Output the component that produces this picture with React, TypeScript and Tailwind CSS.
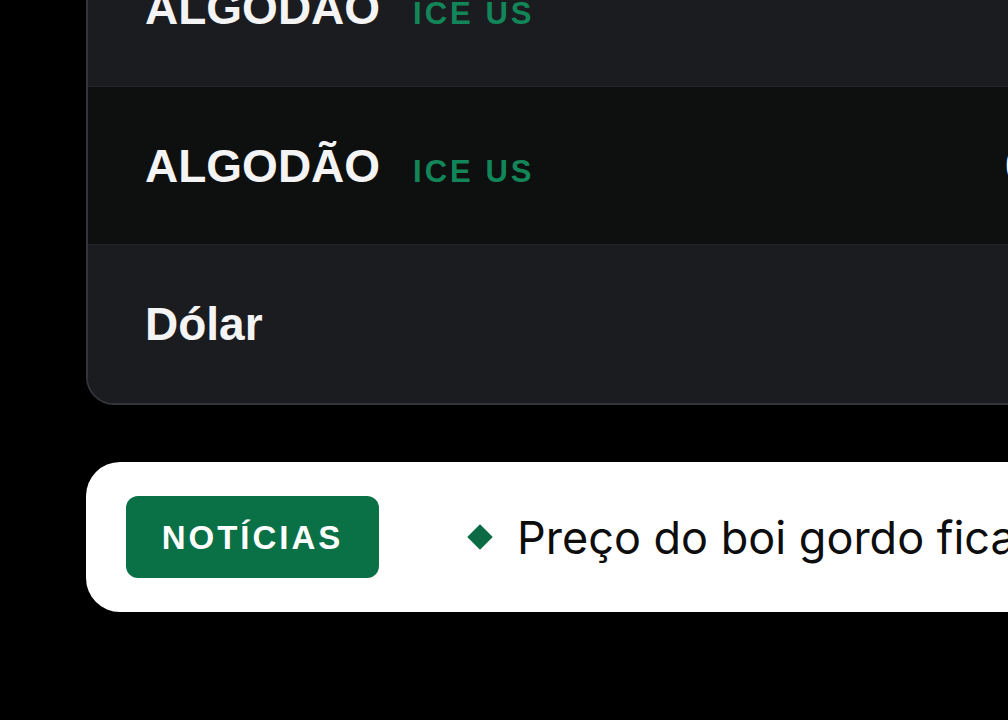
import React from 'react';

interface QuoteRow {
  name: string;
  exchange?: string;
  value?: string;
  highlight?: boolean;
}

const rows: QuoteRow[] = [
  { name: 'ALGODÃO', exchange: 'ICE US' },
  { name: 'ALGODÃO', exchange: 'ICE US', value: '0,6812', highlight: true },
  { name: 'Dólar' },
];

const font = { fontFamily: '"Liberation Sans", Arial, sans-serif' };

export default function App() {
  return (
    <div
      className="h-[720px] w-[1008px] overflow-hidden bg-black pl-[86px]"
      style={font}
    >
      {/* Quotes card */}
      <div className="-mt-[72px] w-[1100px] overflow-hidden rounded-[28px] border-2 border-[#34353a] bg-[#1b1c20]">
        {rows.map((row, i) => (
          <div
            key={i}
            className={`grid grid-cols-[860px_1fr] items-center pl-[57px] ${
              i === 0 ? 'h-[156px]' : i === 1 ? 'h-[158px]' : 'h-[159px]'
            } ${row.highlight ? 'bg-[#0e0f0f]' : 'bg-[#1b1c20]'} ${
              i > 0 ? 'border-t border-[#232428]' : ''
            }`}
          >
            <div className="flex items-baseline gap-[33px]">
              <span className="text-[46px] font-bold leading-none text-[#f4f4f4]">
                {row.name}
              </span>
              {row.exchange && (
                <span className="text-[31px] font-bold leading-none tracking-[3px] text-[#128659]">
                  {row.exchange}
                </span>
              )}
            </div>
            {row.value && (
              <span className="text-[44px] font-bold leading-none text-[#f4f4f4]">
                {row.value}
              </span>
            )}
          </div>
        ))}
      </div>

      {/* News ticker */}
      <div className="mt-[57px] flex h-[150px] w-[1100px] items-center rounded-[34px] bg-white pl-[40px]">
        <div className="flex h-[82px] w-[253px] shrink-0 items-center justify-center rounded-[12px] bg-[#0a7147]">
          <span className="text-[33px] font-bold leading-none tracking-[3px] text-white">NOTÍCIAS</span>
        </div>
        <div className="ml-[92px] flex shrink-0 items-center gap-[28px] whitespace-nowrap">
          <span className="h-[18px] w-[18px] shrink-0 rotate-45 bg-[#0a6b45]" />
          <span
            className="text-[45px] leading-none text-[#0d0d0d]"
            style={{ fontFamily: 'Inter, "Liberation Sans", sans-serif' }}
          >
            Preço do boi gordo fica estável em São Paulo
          </span>
        </div>
      </div>
    </div>
  );
}
